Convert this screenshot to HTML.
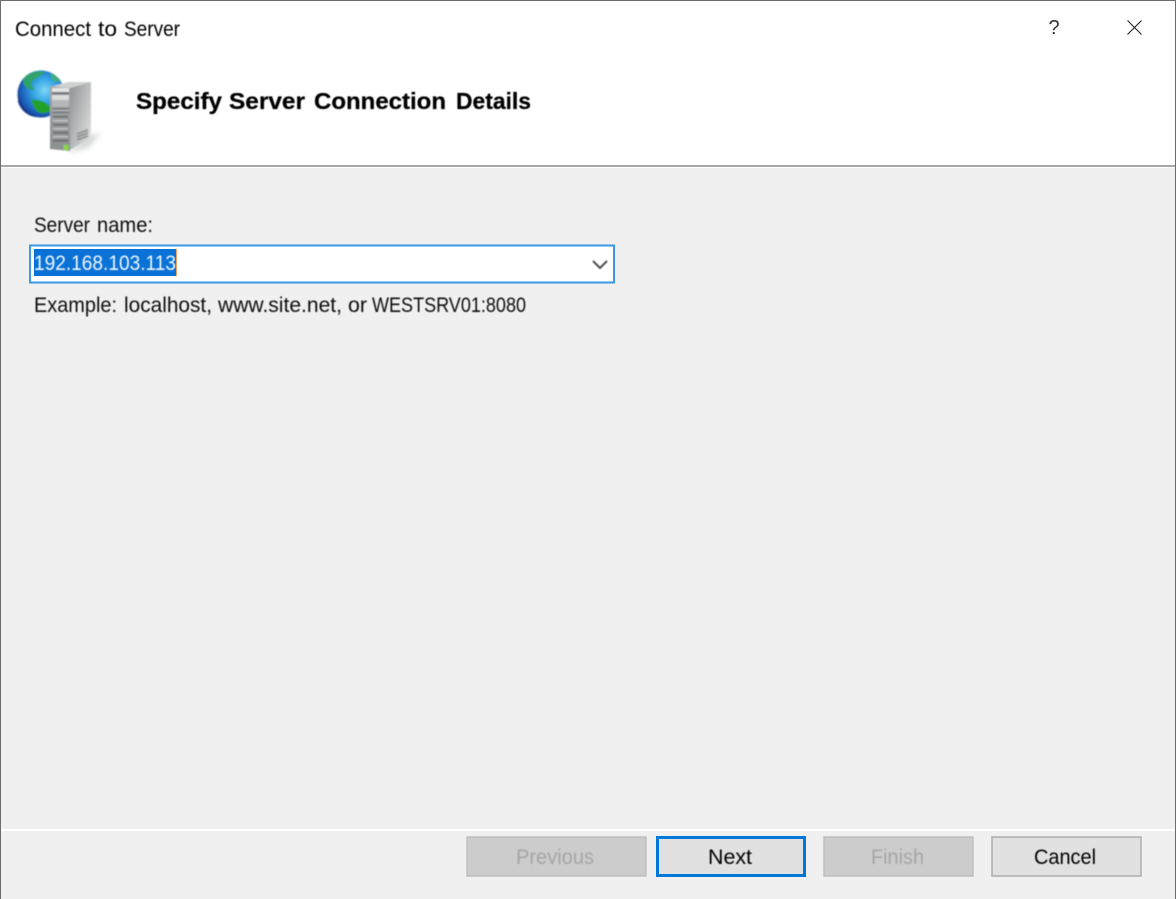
<!DOCTYPE html>
<html lang="en">
<head>
<meta charset="utf-8">
<title>Connect to Server</title>
<style>
html,body{margin:0;padding:0;width:1176px;height:899px;overflow:hidden;background:#f0f0f0}
svg{display:block}
text{font-family:"Liberation Sans",sans-serif;font-size:21px;fill:#111}
.h{font-size:23.5px;font-weight:700;fill:#000;stroke:#000;stroke-width:.25px}
.k{fill:#000}
.d{fill:#a6a6a6}
</style>
</head>
<body>
<svg width="1176" height="899" viewBox="0 0 1176 899" xmlns="http://www.w3.org/2000/svg">
<defs>
<radialGradient id="globe" cx="0.58" cy="0.42" r="0.62">
<stop offset="0" stop-color="#7fd6f6"/>
<stop offset="0.4" stop-color="#35a6e4"/>
<stop offset="0.8" stop-color="#1c61bd"/>
<stop offset="1" stop-color="#163a8c"/>
</radialGradient>
<linearGradient id="front" x1="0" y1="0" x2="0" y2="1">
<stop offset="0" stop-color="#a2a6a7"/>
<stop offset="1" stop-color="#8b8f90"/>
</linearGradient>
<linearGradient id="side" x1="0" y1="0" x2="1" y2="0.8">
<stop offset="0" stop-color="#8d9192"/>
<stop offset="0.55" stop-color="#b9bcbc"/>
<stop offset="1" stop-color="#dcdddd"/>
</linearGradient>
<filter id="b1" x="-10%" y="-10%" width="120%" height="120%"><feGaussianBlur stdDeviation="0.8"/></filter>
<filter id="b2" x="-40%" y="-40%" width="180%" height="180%"><feGaussianBlur stdDeviation="2.5"/></filter>
<filter id="t" x="-2%" y="-20%" width="104%" height="140%"><feGaussianBlur stdDeviation="0.4"/></filter>
<filter id="c" x="-20%" y="-60%" width="140%" height="220%"><feGaussianBlur stdDeviation="0.5"/></filter>
</defs>

<!-- backgrounds -->
<rect width="1176" height="899" fill="#f0f0f0"/>
<rect x="0" y="0" width="1176" height="165" fill="#fff"/>
<rect x="0" y="165" width="1176" height="2" fill="#a8a8a8"/>
<rect x="0" y="167" width="1176" height="1" fill="#fff"/>
<rect x="0" y="829" width="1176" height="2" fill="#fff"/>
<rect x="0" y="0" width="1176" height="1" fill="#6d6d6d"/>
<rect x="0" y="0" width="1" height="899" fill="#6d6d6d"/>
<rect x="1175" y="0" width="1" height="899" fill="#6d6d6d"/>

<!-- title bar -->
<g filter="url(#t)">
<text class="k" x="15" y="36" textLength="76" lengthAdjust="spacingAndGlyphs">Connect</text>
<text class="k" x="98" y="36" textLength="19" lengthAdjust="spacingAndGlyphs">to</text>
<text class="k" x="124" y="36" textLength="56" lengthAdjust="spacingAndGlyphs">Server</text>
<text class="h" x="136" y="109" textLength="86" lengthAdjust="spacingAndGlyphs">Specify</text>
<text class="h" x="229" y="109" textLength="76" lengthAdjust="spacingAndGlyphs">Server</text>
<text class="h" x="314" y="109" textLength="132" lengthAdjust="spacingAndGlyphs">Connection</text>
<text class="h" x="456" y="109" textLength="75" lengthAdjust="spacingAndGlyphs">Details</text>
</g>
<text x="1054" y="34" text-anchor="middle" style="font-size:20px;fill:#333">?</text>
<path d="M1127.5 20.5L1141.5 34.5M1141.5 20.5L1127.5 34.5" stroke="#222" stroke-width="1.1" fill="none"/>

<!-- icon -->
<g filter="url(#b1)">
<path d="M88 136L101 133L88 148L68 153Z" fill="#c9cbcb" filter="url(#b2)" opacity=".75"/>
<circle cx="41" cy="94" r="23.5" fill="url(#globe)"/>
<path d="M25 77c4-4 11-6 17-6 3 1 2 3-1 4-3 2-4 4-8 5-2 3-2 6 2 10-4 1-8-2-11-5-1-3-1-6 1-8z" fill="#2fa36a"/>
<path d="M31 100c6-1 12 1 16 4 3 2 5 5 4 7-3 2-9 3-13 1-4-3-5-7-7-12z" fill="#23a02c"/>
<path d="M50 73c4 1 8 4 11 8l-5 1c-3-1-5-5-6-9z" fill="#3fae78"/>
<path d="M18 95c2 10 9 19 19 22-8 0-16-6-19-15z" fill="#17388a"/>
<!-- server -->
<path d="M50 87L68 82H91L70 88Z" fill="#cfd1d1"/>
<path d="M70 88L91 82V138L70 150Z" fill="url(#side)"/>
<path d="M50 86L70 88V151L50 149Z" fill="url(#front)"/>
<rect x="52" y="88" width="17" height="4" fill="#e4e5e5"/>
<rect x="52" y="92" width="17" height="2.5" fill="#6f7273"/>
<rect x="52" y="95" width="17" height="5" fill="#dcdddd"/>
<rect x="52" y="100" width="17" height="7" fill="#b5b7b8"/>
<rect x="52" y="108" width="17" height="5" fill="#73777a"/>
<rect x="52" y="110" width="17" height="1" fill="#cfd1d1"/>
<rect x="53" y="116" width="15" height="1.5" fill="#5f6364"/>
<rect x="53" y="120" width="15" height="1.5" fill="#c4c6c7"/>
<rect x="53" y="124" width="15" height="1.5" fill="#5f6364"/>
<rect x="53" y="128" width="15" height="1.5" fill="#c4c6c7"/>
<rect x="53" y="132" width="15" height="1.5" fill="#5f6364"/>
<rect x="53" y="136" width="15" height="1.5" fill="#c4c6c7"/>
<rect x="53" y="140" width="15" height="1.5" fill="#5f6364"/>
<path d="M77 133l11-4v2l-11 4zM77 136l11-4v2l-11 4zM77 139l11-4v2l-11 4z" fill="#8c8f90"/>
<rect x="63.5" y="145" width="5" height="5" fill="#86d83a"/>
</g>

<!-- form -->
<g filter="url(#t)">
<text x="34" y="232" textLength="56" lengthAdjust="spacingAndGlyphs">Server</text>
<text x="97" y="232" textLength="56" lengthAdjust="spacingAndGlyphs">name:</text>
<text x="34" y="312" textLength="83" lengthAdjust="spacingAndGlyphs">Example:</text>
<text x="124" y="312" textLength="88" lengthAdjust="spacingAndGlyphs">localhost,</text>
<text x="218" y="312" textLength="124" lengthAdjust="spacingAndGlyphs">www.site.net,</text>
<text x="348" y="312" textLength="19" lengthAdjust="spacingAndGlyphs">or</text>
<text x="372" y="312" textLength="154" lengthAdjust="spacingAndGlyphs">WESTSRV01:8080</text>
</g>
<rect x="30" y="245.5" width="584" height="37" fill="#fff" stroke="#3b98e2" stroke-width="2"/>
<rect x="34" y="249" width="142" height="27" fill="#0a72d6"/>
<rect x="176" y="249" width="1" height="27" fill="#f0a060"/>
<text x="34" y="270" textLength="142" lengthAdjust="spacingAndGlyphs" filter="url(#t)" style="fill:#eef6ff">192.168.103.113</text>
<path d="M593 261L600 268L607 261" stroke="#4d4d4d" stroke-width="2" fill="none" filter="url(#c)"/>

<!-- buttons -->
<rect x="467" y="837" width="179" height="39" fill="#cccccc" stroke="#bfbfbf" stroke-width="1.5"/>
<rect x="657.5" y="837.5" width="147" height="38" fill="#e1e1e1" stroke="#0078d7" stroke-width="3"/>
<rect x="824" y="837" width="149" height="39" fill="#cccccc" stroke="#bfbfbf" stroke-width="1.5"/>
<rect x="992" y="837" width="149" height="39" fill="#e1e1e1" stroke="#adadad" stroke-width="1.5"/>
<g filter="url(#t)">
<text class="d" x="516" y="864" textLength="78" lengthAdjust="spacingAndGlyphs">Previous</text>
<text class="k" x="708" y="864" textLength="44" lengthAdjust="spacingAndGlyphs">Next</text>
<text class="d" x="871" y="864" textLength="53" lengthAdjust="spacingAndGlyphs">Finish</text>
<text class="k" x="1034" y="864" textLength="62" lengthAdjust="spacingAndGlyphs">Cancel</text>
</g>
</svg>
</body>
</html>
